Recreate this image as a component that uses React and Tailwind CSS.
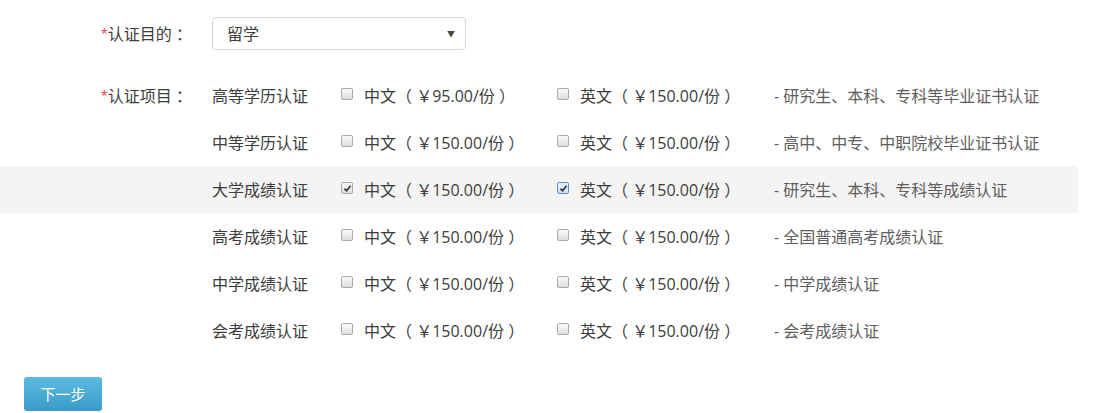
import { Fragment } from "react";

const items = [
  { name: "高等学历认证", cn: "95.00", en: "150.00", desc: "研究生、本科、专科等毕业证书认证" },
  { name: "中等学历认证", cn: "150.00", en: "150.00", desc: "高中、中专、中职院校毕业证书认证" },
  { name: "大学成绩认证", cn: "150.00", en: "150.00", desc: "研究生、本科、专科等成绩认证", checked: true },
  { name: "高考成绩认证", cn: "150.00", en: "150.00", desc: "全国普通高考成绩认证" },
  { name: "中学成绩认证", cn: "150.00", en: "150.00", desc: "中学成绩认证" },
  { name: "会考成绩认证", cn: "150.00", en: "150.00", desc: "会考成绩认证" },
];

function Box({ checked, focus }) {
  return (
    <span
      className={`inline-flex items-center justify-center w-[12px] h-[12px] -mt-[3px] rounded-[2px] border ${
        focus
          ? "border-[#5b8fd6] bg-gradient-to-b from-[#eef4fc] to-[#cfe0f5]"
          : "border-[#a9a9a9] bg-gradient-to-b from-[#fbfbfb] to-[#dedede]"
      }`}
    >
      {checked && (
        <svg width="9" height="9" viewBox="0 0 9 9">
          <path d="M1.5 4.6 L3.6 6.8 L7.6 1.8" fill="none" stroke="#333" strokeWidth="1.7" />
        </svg>
      )}
    </span>
  );
}

function Star() {
  return <span className="text-[#e4393c] text-[13px] align-[2px]">*</span>;
}

export default function App() {
  return (
    <div
      className="w-[1098px] h-[413px] bg-white text-[16px] text-[#3d3d3d] overflow-hidden"
      style={{ fontFamily: '"Open Sans", "Noto Sans CJK SC", sans-serif' }}
    >
      {/* 认证目的 */}
      <div className="flex items-center pt-[17px]">
        <div className="w-[192px] text-right">
          <Star />认证目的 ：
        </div>
        <div className="ml-[20px] w-[254px] h-[33px] border border-[#d6d6d6] rounded-[4px] flex items-center justify-between pl-[14px] pr-[10px]">
          <span>留学</span>
          <span className="text-[8px] text-[#444]">▼</span>
        </div>
      </div>

      {/* 认证项目 */}
      <div className="mt-[22px]">
        {items.map((it, i) => (
          <div
            key={it.name}
            className={`flex items-center h-[47px] w-[1078px] ${it.checked ? "bg-[#f4f4f4]" : ""}`}
          >
            <div className="w-[192px] text-right">
              {i === 0 && (
                <Fragment>
                  <Star />认证项目 ：
                </Fragment>
              )}
            </div>
            <div className="ml-[20px] w-[129px]">{it.name}</div>
            <div className="w-[216px] flex items-center gap-[11px]">
              <Box checked={it.checked} />
              <span>中文（ ￥{it.cn}/份 ）</span>
            </div>
            <div className="w-[217px] flex items-center gap-[11px]">
              <Box checked={it.checked} focus={it.checked} />
              <span>英文（ ￥{it.en}/份 ）</span>
            </div>
            <div className="text-[#5e5e5e]">- {it.desc}</div>
          </div>
        ))}
      </div>

      <div className="pl-[24px] mt-[23px]">
        <button className="w-[78px] h-[34px] rounded-[3px] bg-gradient-to-b from-[#5bbbe0] to-[#3a9bc9] text-white text-[15px]">
          下一步
        </button>
      </div>
    </div>
  );
}
